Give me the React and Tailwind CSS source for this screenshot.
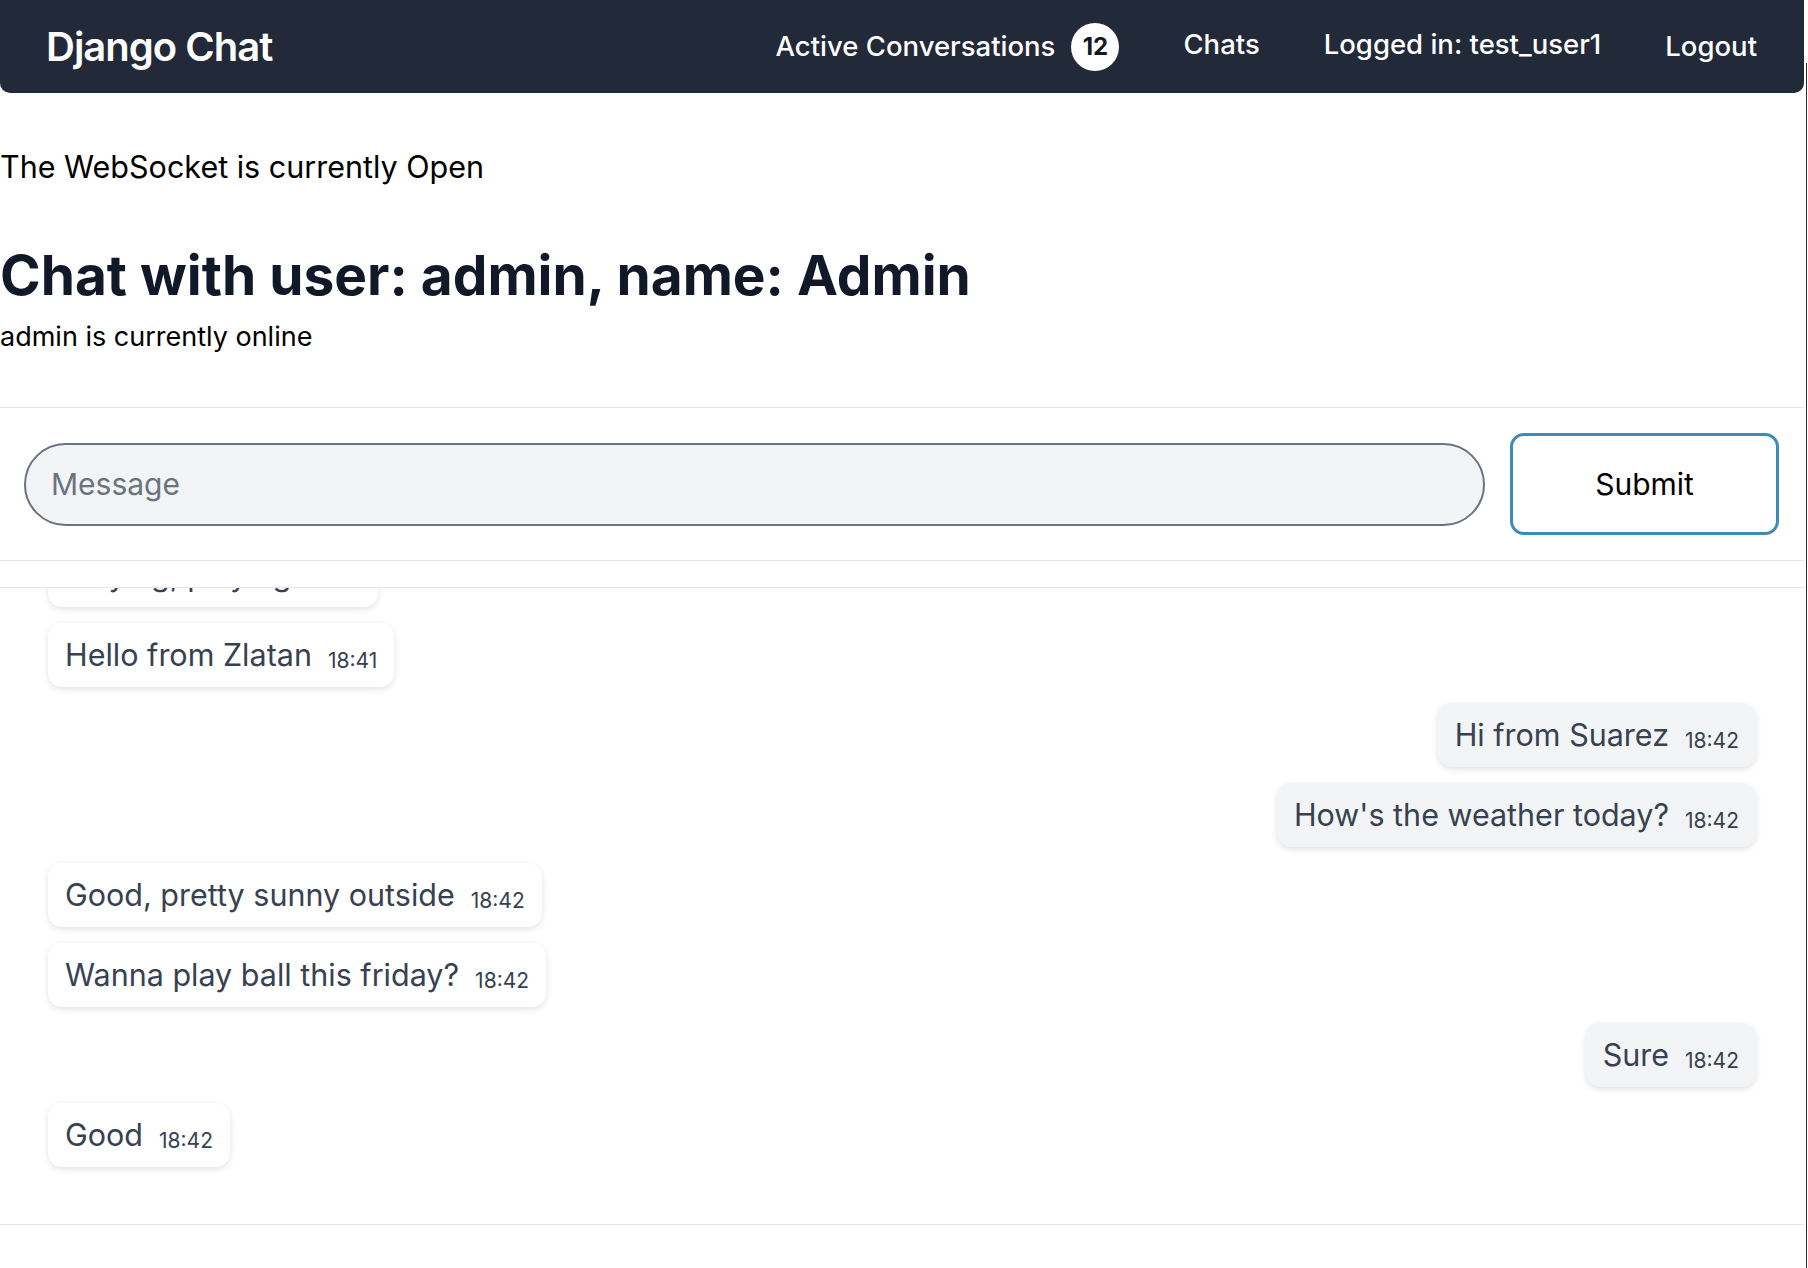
import { useState } from 'react';

const messages = [
  { text: 'Playing, playing', time: '18:29', mine: false },
  { text: 'Hello from Zlatan', time: '18:41', mine: false },
  { text: 'Hi from Suarez', time: '18:42', mine: true },
  { text: "How's the weather today?", time: '18:42', mine: true },
  { text: 'Good, pretty sunny outside', time: '18:42', mine: false },
  { text: 'Wanna play ball this friday?', time: '18:42', mine: false },
  { text: 'Sure', time: '18:42', mine: true },
  { text: 'Good', time: '18:42', mine: false },
];

const Navbar = () => (
  <header className="h-[93px] bg-[#222938] rounded-b-[10px] flex items-center justify-between pl-[46px] pr-[47px] text-white">
    <span className="text-[40px] font-semibold tracking-tight">Django Chat</span>
    <nav className="flex items-center gap-16 text-[27.5px] font-medium">
      <div className="flex items-center gap-4">
        <span>Active Conversations</span>
        <span className="w-12 h-12 rounded-full bg-white text-[#111827] text-[24px] font-bold flex items-center justify-center">
          12
        </span>
      </div>
      <span className="-mt-1">Chats</span>
      <span className="-mt-1">Logged in: test_user1</span>
      <span>Logout</span>
    </nav>
  </header>
);

const Bubble = ({ msg }) => (
  <div className={`flex ${msg.mine ? 'justify-end' : 'justify-start'}`}>
    <div
      className={`flex items-baseline rounded-[14px] px-[17px] py-3 shadow-[0_2px_6px_rgba(0,0,0,0.12)] ${
        msg.mine ? 'bg-[#f3f4f6]' : 'bg-white'
      }`}
    >
      <span className="text-[30.5px] leading-10 text-[#374151]">{msg.text}</span>
      <span className="ml-4 text-[21px] text-[#374151] translate-y-[2px]">{msg.time}</span>
    </div>
  </div>
);

export default function App() {
  const [draft, setDraft] = useState('');

  return (
    <div className="flex min-h-[1268px] bg-white font-[Inter,sans-serif]">
      <div className="w-[1804px]">
        <Navbar />

        {/* Status + title */}
        <div className="pt-[56px] text-black">
          <p className="text-[30.5px] leading-9">The WebSocket is currently Open</p>
          <h1 className="mt-[60px] text-[55px] leading-[60px] font-bold text-[#111827]">
            Chat with user: admin, name: Admin
          </h1>
          <p className="mt-4 text-[27px] leading-8">admin is currently online</p>
        </div>

        {/* Message form */}
        <form
          onSubmit={(e) => e.preventDefault()}
          className="mt-[54px] flex items-center gap-[25px] pl-6 pr-[25px] py-[25px] border-y border-[#e5e7eb]"
        >
          <input
            value={draft}
            onChange={(e) => setDraft(e.target.value)}
            placeholder="Message"
            className="flex-1 h-[83px] rounded-full border-2 border-[#6b7280] bg-[#f3f4f6] px-[25px] text-[30px] text-[#374151] placeholder:text-[#6b7280] outline-none"
          />
          <button
            type="submit"
            className="w-[269px] h-[102px] rounded-[14px] border-[3px] border-[#3d8bb8] bg-white text-[30px] text-black"
          >
            Submit
          </button>
        </form>

        {/* Messages */}
        <div className="mt-[26px] h-[638px] overflow-hidden border-y border-[#e5e7eb] flex flex-col justify-end gap-4 px-12 pb-[57px]">
          {messages.map((m, i) => (
            <Bubble key={i} msg={m} />
          ))}
        </div>
      </div>
      <div className="w-[4px] pl-[2px] pt-[63px]">
        <div className="w-px h-[1205px] bg-[#2a2a2a]" />
      </div>
    </div>
  );
}
